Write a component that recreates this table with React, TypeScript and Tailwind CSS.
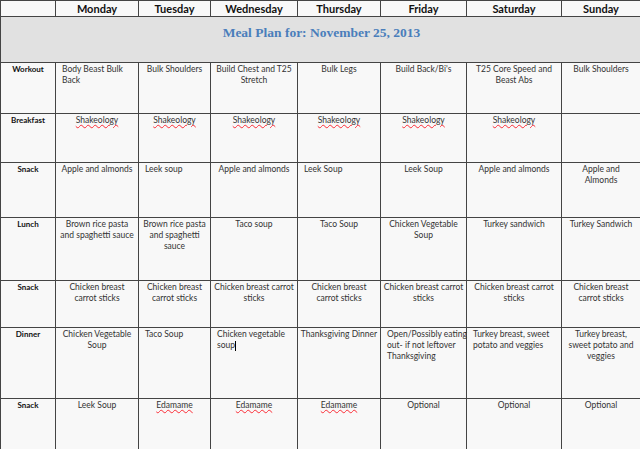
type Align = "c" | "l";

interface Cell {
  lines: string[];
  align: Align;
  spell?: boolean;
  cursor?: boolean;
}

const days = ["Monday", "Tuesday", "Wednesday", "Thursday", "Friday", "Saturday", "Sunday"];

const c = (align: Align, ...lines: string[]): Cell => ({ lines, align });
const shake: Cell = { lines: ["Shakeology"], align: "c", spell: true };
const edam: Cell = { lines: ["Edamame"], align: "c", spell: true };

const rows: { label: string; h: string; cells: Cell[] }[] = [
  {
    label: "Workout",
    h: "h-[51px]",
    cells: [
      c("l", "Body Beast Bulk", "Back"),
      c("c", "Bulk Shoulders"),
      c("c", "Build Chest and T25", "Stretch"),
      c("c", "Bulk Legs"),
      c("c", "Build Back/Bi's"),
      c("c", "T25 Core Speed and", "Beast Abs"),
      c("c", "Bulk Shoulders"),
    ],
  },
  {
    label: "Breakfast",
    h: "h-[49px]",
    cells: [shake, shake, shake, shake, shake, shake, c("c")],
  },
  {
    label: "Snack",
    h: "h-[55px]",
    cells: [
      c("c", "Apple and almonds"),
      c("l", "Leek soup"),
      c("c", "Apple and almonds"),
      c("l", "Leek Soup"),
      c("c", "Leek Soup"),
      c("c", "Apple and almonds"),
      c("c", "Apple and", "Almonds"),
    ],
  },
  {
    label: "Lunch",
    h: "h-[63px]",
    cells: [
      c("c", "Brown rice pasta", "and spaghetti sauce"),
      c("c", "Brown rice pasta", "and spaghetti", "sauce"),
      c("c", "Taco soup"),
      c("c", "Taco Soup"),
      c("c", "Chicken Vegetable", "Soup"),
      c("c", "Turkey sandwich"),
      c("c", "Turkey Sandwich"),
    ],
  },
  {
    label: "Snack",
    h: "h-[47px]",
    cells: [
      c("c", "Chicken breast", "carrot sticks"),
      c("c", "Chicken breast", "carrot sticks"),
      c("c", "Chicken breast carrot", "sticks"),
      c("c", "Chicken breast", "carrot sticks"),
      c("c", "Chicken breast carrot", "sticks"),
      c("c", "Chicken breast carrot", "sticks"),
      c("c", "Chicken breast", "carrot sticks"),
    ],
  },
  {
    label: "Dinner",
    h: "h-[71px]",
    cells: [
      c("c", "Chicken Vegetable", "Soup"),
      c("l", "Taco Soup"),
      { lines: ["Chicken vegetable", "soup"], align: "l", cursor: true },
      c("c", "Thanksgiving Dinner"),
      c("l", "Open/Possibly eating", "out- if not leftover", "Thanksgiving"),
      c("l", "Turkey breast, sweet", "potato and veggies"),
      c("c", "Turkey breast,", "sweet potato and", "veggies"),
    ],
  },
  {
    label: "Snack",
    h: "h-[60px]",
    cells: [
      c("c", "Leek Soup"),
      edam,
      edam,
      edam,
      c("c", "Optional"),
      c("c", "Optional"),
      c("c", "Optional"),
    ],
  },
];

const widths = ["w-[55px]", "w-[83px]", "w-[72px]", "w-[87px]", "w-[83px]", "w-[86px]", "w-[95px]", "w-[79px]"];

export default function App() {
  return (
    <div className="w-[640px] h-[449px] overflow-hidden bg-[#f8f8f8] font-['Lato',sans-serif] text-[#333]">
      <table className="table-fixed border-collapse w-[640px]">
        <colgroup>
          {widths.map((w, i) => (
            <col key={i} className={w} />
          ))}
        </colgroup>
        <tbody>
          <tr className="h-[16px]">
            <td className="border border-[#444] p-0" />
            {days.map((d) => (
              <td key={d} className="border border-[#444] p-0 text-center text-[11px] leading-[14px] font-bold text-[#111]">
                {d}
              </td>
            ))}
          </tr>
          <tr className="h-[46px]">
            <td colSpan={8} className="border border-[#444] bg-[#e1e1e1] p-0 align-top text-center">
              <div className="pt-[8px] pl-[2px] font-['Liberation_Serif',serif] font-bold text-[13.5px] leading-[16px] text-[#4a7ebb]">
                Meal Plan for: November 25, 2013
              </div>
            </td>
          </tr>
          {rows.map((r, ri) => (
            <tr key={ri} className={r.h}>
              <td className="border border-[#444] p-0 pt-px align-top text-center text-[8px] leading-[11px] font-bold text-[#111]">
                {r.label}
              </td>
              {r.cells.map((cell, ci) => (
                <td
                  key={ci}
                  className={`border border-[#444] p-0 pt-px align-top text-[8.5px] leading-[11px] ${
                    cell.align === "c" ? "text-center px-[2px]" : "text-left pl-[6px]"
                  }`}
                >
                  {cell.lines.map((line, li) => (
                    <div key={li} className="whitespace-nowrap">
                      {cell.spell ? (
                        <span className="underline decoration-wavy decoration-red-500 decoration-1 underline-offset-1">
                          {line}
                        </span>
                      ) : (
                        line
                      )}
                      {cell.cursor && li === cell.lines.length - 1 && (
                        <span className="inline-block w-px h-[10px] bg-black align-middle" />
                      )}
                    </div>
                  ))}
                </td>
              ))}
            </tr>
          ))}
        </tbody>
      </table>
    </div>
  );
}
